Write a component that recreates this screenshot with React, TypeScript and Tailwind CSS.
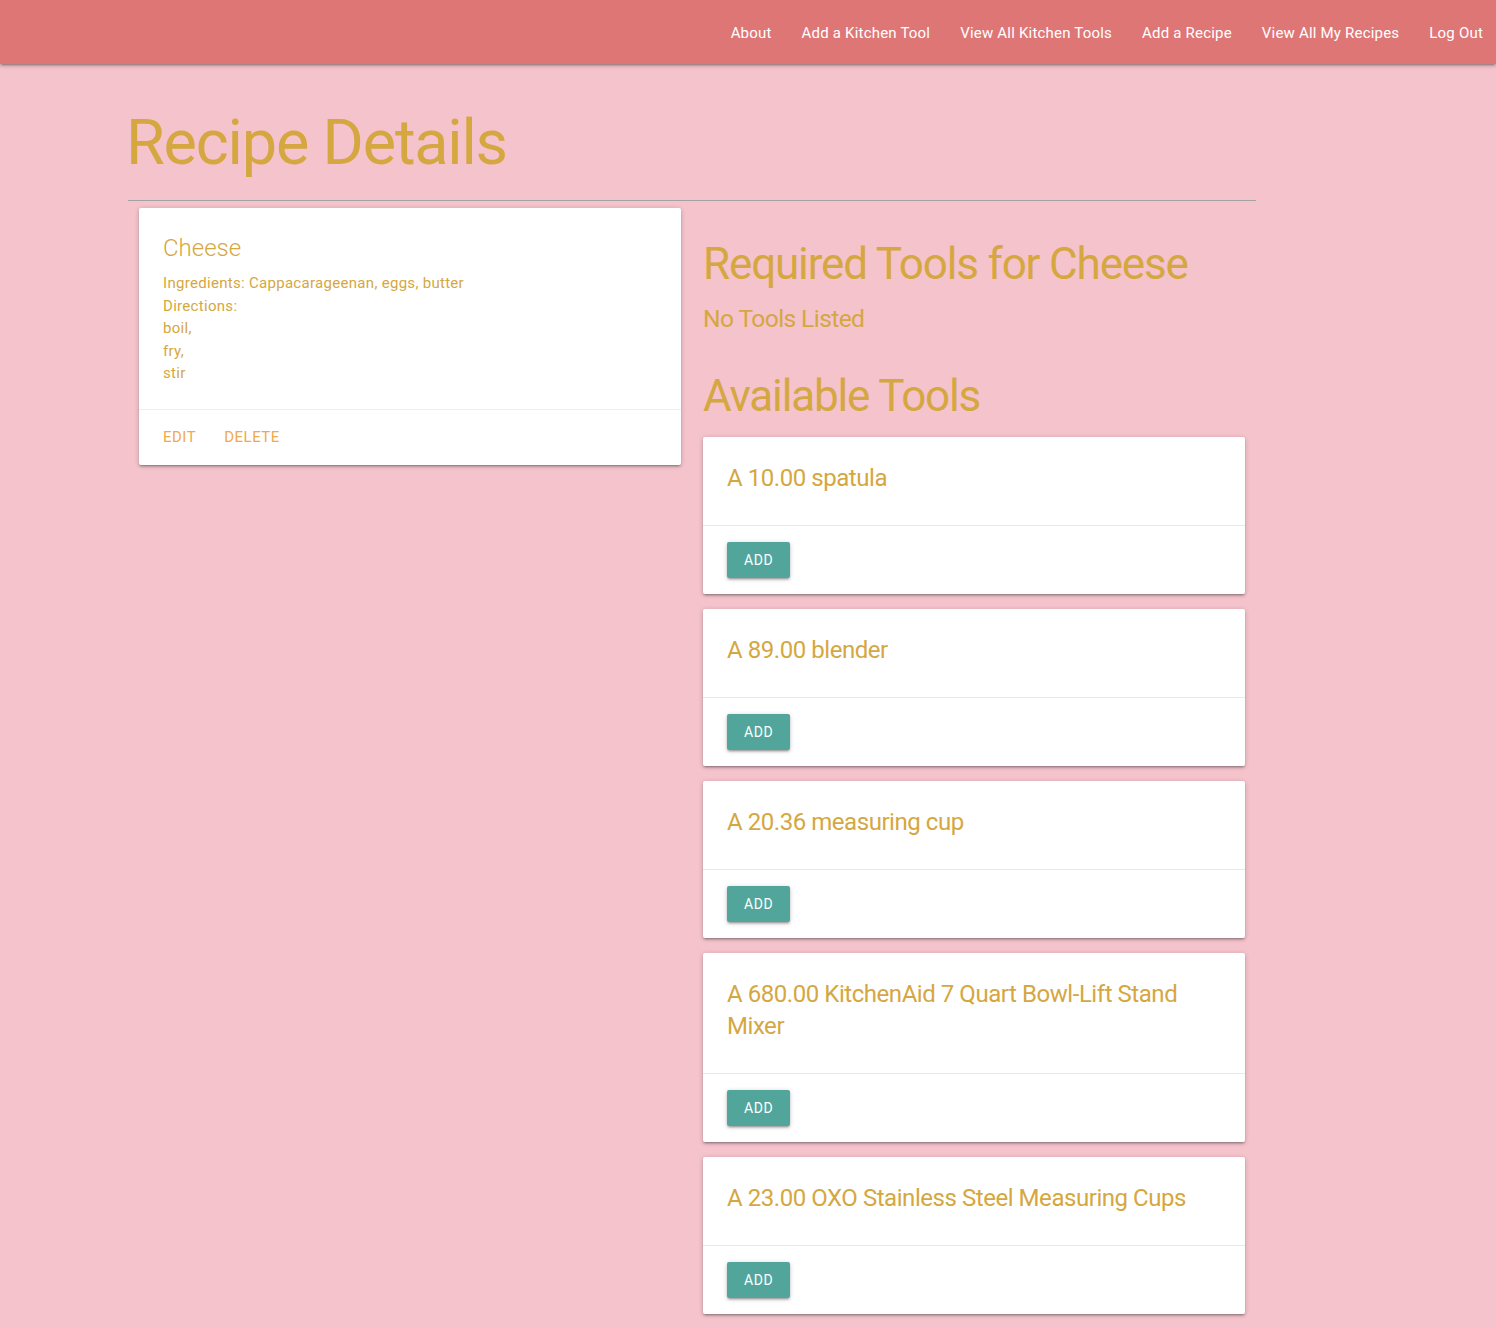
import React from "react";

const navLinks = [
  "About",
  "Add a Kitchen Tool",
  "View All Kitchen Tools",
  "Add a Recipe",
  "View All My Recipes",
  "Log Out",
];

const tools = [
  "A 10.00 spatula",
  "A 89.00 blender",
  "A 20.36 measuring cup",
  "A 680.00 KitchenAid 7 Quart Bowl-Lift Stand Mixer",
  "A 23.00 OXO Stainless Steel Measuring Cups",
];

const shadow =
  "shadow-[0_2px_2px_0_rgba(0,0,0,0.14),0_3px_1px_-2px_rgba(0,0,0,0.12),0_1px_5px_0_rgba(0,0,0,0.2)]";

const ToolCard = ({ name }: { name: string }) => (
  <div className={`bg-white rounded-[2px] ${shadow}`}>
    <div className="px-6 pt-[25px] pb-[31px]">
      <span className="block text-[24px] leading-8 tracking-[-0.45px] text-[#d5a741]">{name}</span>
    </div>
    <div className="border-t border-[#e8e8e8] px-6 py-4">
      <button className={`h-9 px-[17px] rounded-[2px] bg-[#52a59a] text-white text-[14px] tracking-[0.6px] uppercase ${shadow}`}>
        Add
      </button>
    </div>
  </div>
);

export default function App() {
  return (
    <div className="min-h-screen bg-[#f4c3cc] font-['Roboto',sans-serif] pb-4">
      {/* top nav */}
      <nav className={`h-16 bg-[#df7676] ${shadow}`}>
        <ul className="flex justify-end h-full items-center pt-[2px] mr-[-2px]">
          {navLinks.map((l) => (
            <li key={l}>
              <a href="#" className="px-[15px] text-[15px] tracking-[0.2px] text-white leading-[62px]">
                {l}
              </a>
            </li>
          ))}
        </ul>
      </nav>

      <div className="ml-[128px] w-[1128px]">
        <h1 className="pt-[44px] pb-[23px] text-[63px] leading-[69px] tracking-[-1.2px] text-[#d5a741] -ml-[2px]">
          Recipe Details
        </h1>
        <hr className="border-t border-[#a3a3a3]" />

        <div className="grid grid-cols-2">
          {/* recipe card */}
          <div className="px-[11px] pt-[7px]">
            <div className={`bg-white rounded-[2px] ${shadow}`}>
              <div className="p-6">
                <span className="block text-[24px] leading-8 font-light text-[#d5a741] mb-2">Cheese</span>
                <div className="text-[15px] leading-[22.5px] tracking-[0.3px] text-[#d5a741]">
                  <p>Ingredients: Cappacarageenan, eggs, butter</p>
                  <p>Directions:</p>
                  <p>boil,</p>
                  <p>fry,</p>
                  <p>stir</p>
                </div>
              </div>
              <div className="border-t border-[#eeeeee] px-6 py-4 flex gap-7 text-[15px] leading-[23px] tracking-[0.5px] uppercase text-[#f0aa4c]">
                <a href="#">Edit</a>
                <a href="#">Delete</a>
              </div>
            </div>
          </div>

          {/* tools column */}
          <div className="px-[11px]">
            <h3 className="mt-[39px] text-[44px] leading-[48px] tracking-[-1.15px] text-[#d5a741] whitespace-nowrap">
              Required Tools for Cheese
            </h3>
            <h5 className="mt-[16px] text-[24.6px] leading-[30px] tracking-[-0.6px] text-[#d5a741]">No Tools Listed</h5>
            <h3 className="mt-[38px] text-[44px] leading-[48px] tracking-[-1.15px] text-[#d5a741]">Available Tools</h3>
            <div className="mt-[17px] flex flex-col gap-[15px]">
              {tools.map((t) => (
                <ToolCard key={t} name={t} />
              ))}
            </div>
          </div>
        </div>
      </div>
    </div>
  );
}
